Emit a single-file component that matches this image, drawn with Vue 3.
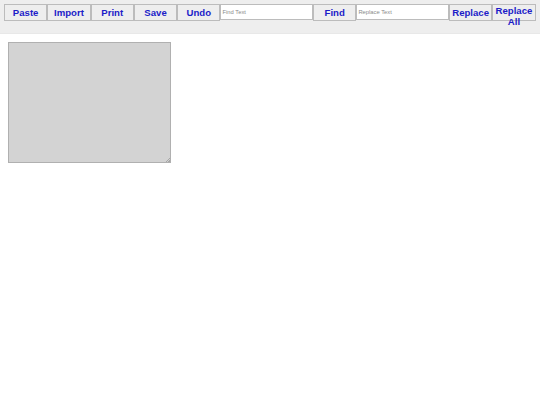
<template>
  <div class="editor">
    <div class="toolbar">
      <button v-for="name in leftButtons" :key="name" type="button" class="tool-btn">{{ name }}</button>
      <input v-model="findText" type="text" class="tool-input" placeholder="Find Text" />
      <button type="button" class="tool-btn">Find</button>
      <input v-model="replaceText" type="text" class="tool-input" placeholder="Replace Text" />
      <button type="button" class="tool-btn">Replace</button>
      <button type="button" class="tool-btn">Replace All</button>
    </div>

    <div class="content">
      <textarea v-model="body" class="text-box"></textarea>
    </div>
  </div>
</template>

<script setup>
import { ref } from 'vue'

const leftButtons = ['Paste', 'Import', 'Print', 'Save', 'Undo']

const findText = ref('')
const replaceText = ref('')
const body = ref('')
</script>

<style>
html,
body {
  background: #fff;
}
</style>

<style scoped>
.editor {
  font-family: "Liberation Sans", Arial, sans-serif;
  text-rendering: geometricPrecision;
}

.toolbar {
  display: flex;
  align-items: flex-start;
  height: 34px;
  padding: 4px 4px 0;
  box-sizing: border-box;
  background: #eeeeee;
  border-bottom: 1px solid #e8e8e8;
}

.tool-btn {
  flex: 0 0 43.3px;
  height: 17.4px;
  padding: 1px 0 0;
  box-sizing: border-box;
  border: 1px solid #bcbcbc;
  border-radius: 0;
  background: #eeeeee;
  color: #1c1cc8;
  font-family: inherit;
  font-size: 9.6px;
  font-weight: 700;
  line-height: 10.5px;
  text-align: center;
  cursor: pointer;
}

.tool-input {
  flex: 0 0 92.6px;
  height: 16px;
  padding: 0 1px;
  box-sizing: border-box;
  border: 1px solid #bcbcbc;
  border-radius: 0;
  background: #fff;
  font-family: inherit;
  font-size: 5.8px;
  outline: none;
}

.tool-input::placeholder {
  color: #8a8a8a;
}

.content {
  padding: 8px 8px 0;
}

.text-box {
  display: block;
  width: 163px;
  height: 121px;
  padding: 2px;
  box-sizing: border-box;
  border: 1px solid #b0b0b0;
  border-radius: 0;
  background: #d3d3d3;
  outline: none;
}

.text-box::-webkit-resizer {
  background: linear-gradient(135deg, transparent 50%, #a6a6a6 50%, #a6a6a6 68%, transparent 68%, transparent 78%, #a6a6a6 78%) no-repeat right bottom / 5px 5px;
}
</style>
